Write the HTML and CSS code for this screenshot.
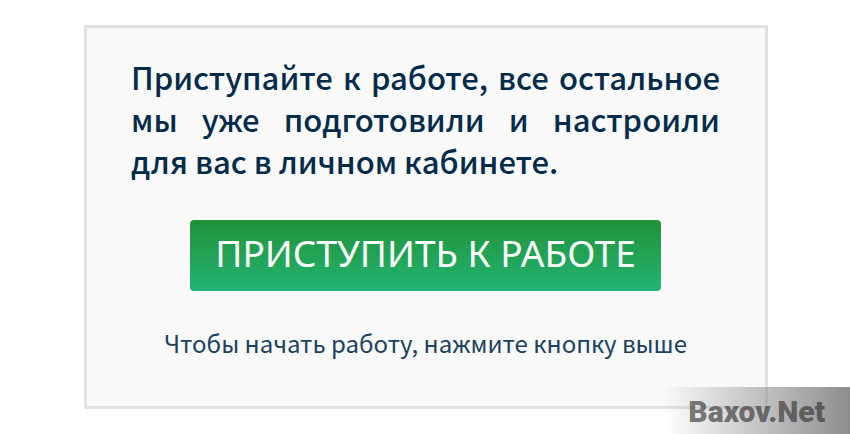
FILE: index.html
```html
<!DOCTYPE html>
<html lang="ru">
<head>
    <meta charset="UTF-8">
    <meta name="viewport" content="width=device-width, initial-scale=1.0">
    <title>Приступайте к работе</title>
    <link rel="stylesheet" href="styles.css">
</head>
<body>
    <main class="card">
        <h1 class="title">Приступайте к работе, все остальное мы уже подготовили и настроили для&nbsp;вас в личном кабинете.</h1>
        <button type="button" class="start-button">ПРИСТУПИТЬ К РАБОТЕ</button>
        <p class="hint">Чтобы начать работу, нажмите кнопку выше</p>
    </main>
    <div class="watermark">Baxov.Net</div>
</body>
</html>
```
FILE: styles.css
```css
* {
    box-sizing: border-box;
}
body {
    margin: 0;
    padding: 25px 82px 24px 84px;
    background: #fff;
    color: #022b49;
    font-family: "Noto Sans CJK SC", "Noto Sans", sans-serif;
}
.card {
    display: flex;
    flex-direction: column;
    align-items: center;
    padding: 28px 45px 45px 44px;
    background: #f9f9f9;
    border: 3px solid #e2e2e2;
}
.title {
    width: 100%;
    margin: 0 0 38px;
    font-size: 31px;
    font-weight: 500;
    line-height: 42px;
    text-align: justify;
}
.start-button {
    width: 80%;
    height: 71px;
    padding: 0 0 6px;
    border: none;
    border-radius: 4px;
    background: linear-gradient(#229139, #22b573);
    box-shadow: 0 0 0 2px #fff;
    color: #fff;
    font-family: "Noto Sans", sans-serif;
    font-size: 37px;
    line-height: 1;
    white-space: nowrap;
    cursor: pointer;
}
.hint {
    margin: 34px 0 0;
    color: #1b415c;
    font-size: 24px;
    line-height: 36px;
}
.watermark {
    position: absolute;
    right: 0;
    bottom: 0;
    padding: 8px 25px 5px 24px;
    background: linear-gradient(90deg, rgba(128, 128, 128, 0), rgba(128, 128, 128, 0.9));
    color: rgba(50, 50, 50, 0.65);
    font-family: "Impact", "Roboto", sans-serif;
    font-size: 30px;
    font-weight: 900;
    line-height: 34px;
}
```
